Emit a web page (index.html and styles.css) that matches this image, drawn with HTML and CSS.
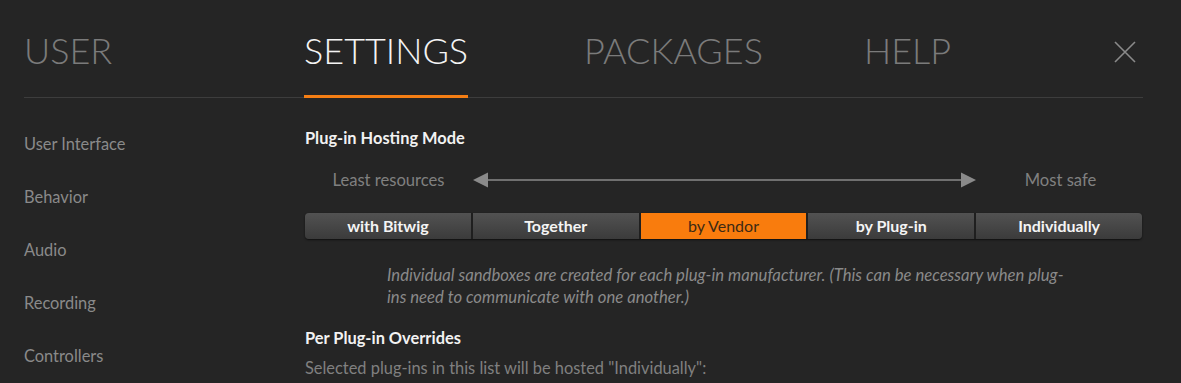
FILE: index.html
```html
<!DOCTYPE html>
<html lang="en">

<head>
    <meta charset="UTF-8">
    <title>Settings</title>
    <link rel="stylesheet" href="styles.css">
</head>

<body>
    <header class="top-bar">
        <nav class="tabs">
            <div class="tab">USER</div>
            <div class="tab active">SETTINGS</div>
            <div class="tab">PACKAGES</div>
            <div class="tab">HELP</div>
        </nav>
        <button class="close-btn" aria-label="Close">
            <svg width="22" height="22" viewBox="0 0 22 22">
                <path d="M1 1 L21 21 M21 1 L1 21" stroke="#8a8a8a" stroke-width="1.6" fill="none" />
            </svg>
        </button>
    </header>

    <div class="main">
        <aside class="side-menu">
            <div class="side-item">User Interface</div>
            <div class="side-item">Behavior</div>
            <div class="side-item">Audio</div>
            <div class="side-item">Recording</div>
            <div class="side-item">Controllers</div>
        </aside>

        <section class="content">
            <h2 class="section-title">Plug-in Hosting Mode</h2>

            <div class="scale-row">
                <span class="scale-label">Least resources</span>
                <div class="scale-arrow">
                    <svg width="504" height="16" viewBox="0 0 504 16" preserveAspectRatio="none">
                        <polygon points="0,8 15,0.5 15,15.5" fill="#8a8a8a" />
                        <polygon points="503,8 488,0.5 488,15.5" fill="#8a8a8a" />
                        <line x1="14" y1="8" x2="490" y2="8" stroke="#8a8a8a" stroke-width="1.5" />
                    </svg>
                </div>
                <span class="scale-label">Most safe</span>
            </div>

            <div class="mode-switch">
                <div class="mode-btn">with Bitwig</div>
                <div class="mode-btn">Together</div>
                <div class="mode-btn selected">by Vendor</div>
                <div class="mode-btn">by Plug-in</div>
                <div class="mode-btn">Individually</div>
            </div>

            <p class="mode-desc">Individual sandboxes are created for each plug-in manufacturer. (This can be necessary when plug-ins need to communicate with one another.)</p>

            <h2 class="section-title overrides">Per Plug-in Overrides</h2>
            <p class="hint">Selected plug-ins in this list will be hosted "Individually":</p>
        </section>
    </div>
</body>

</html>
```

FILE: styles.css
```css
* {
    margin: 0;
    padding: 0;
    box-sizing: border-box;
    font-family: Lato, "Noto Sans", sans-serif;
}

body {
    background-color: #252525;
    width: 1181px;
    height: 383px;
    overflow: hidden;
}

.top-bar {
    display: flex;
    justify-content: space-between;
    align-items: flex-start;
    margin: 0 38px 0 24px;
    padding-top: 32px;
    border-bottom: 1px solid #3d3d3d;
}

.tabs {
    display: grid;
    grid-template-columns: repeat(3, 280px) auto;
    align-items: start;
}

.tab {
    justify-self: start;
    font-size: 36px;
    font-weight: 300;
    line-height: 36px;
    color: #7b7b7b;
    padding-bottom: 27px;
    border-bottom: 3px solid transparent;
    margin-bottom: -1px;
}

.tab.active {
    color: #f4f4f4;
    border-bottom-color: #f57e14;
}

.close-btn {
    background: none;
    border: none;
    margin-top: 9px;
    margin-right: 7px;
    width: 22px;
    height: 22px;
}

.close-btn svg {
    display: block;
}

.main {
    display: flex;
}

.side-menu {
    width: 305px;
    padding: 19px 0 0 24px;
}

.side-item {
    font-size: 16.4px;
    line-height: 53px;
    color: #8a8a8a;
}

.content {
    width: 837px;
}

.section-title {
    font-size: 16.4px;
    font-weight: bold;
    color: #f2f2f2;
    line-height: 20px;
    margin-top: 30px;
}

.scale-row {
    display: grid;
    grid-template-columns: 167px 1fr 167px;
    align-items: center;
    height: 20px;
    margin-top: 22px;
}

.scale-label {
    text-align: center;
    font-size: 16.6px;
    color: #808080;
}

.scale-arrow {
    display: flex;
    padding-left: 1px;
}

.mode-switch {
    display: flex;
    margin-top: 23px;
    height: 26px;
    border-radius: 4px;
    overflow: hidden;
    box-shadow: 0 1px 2px rgba(0, 0, 0, 0.6);
}

.mode-btn {
    flex: 1;
    text-align: center;
    font-size: 16px;
    font-weight: bold;
    line-height: 26px;
    color: #f4f4f4;
    background: linear-gradient(#525252, #3b3b3b);
    border-left: 2px solid #1f1f1f;
}

.mode-btn:first-child {
    border-left: none;
}

.mode-btn.selected {
    background: #f97c0d;
    color: #3d2a14;
    font-weight: normal;
}

.mode-desc {
    width: 690px;
    margin: 25px 0 0 82px;
    font-size: 16.7px;
    font-style: italic;
    line-height: 22px;
    color: #8a8a8a;
}

.section-title.overrides {
    margin-top: 20px;
}

.hint {
    margin-top: 10px;
    font-size: 16.4px;
    line-height: 20px;
    color: #808080;
}
```
